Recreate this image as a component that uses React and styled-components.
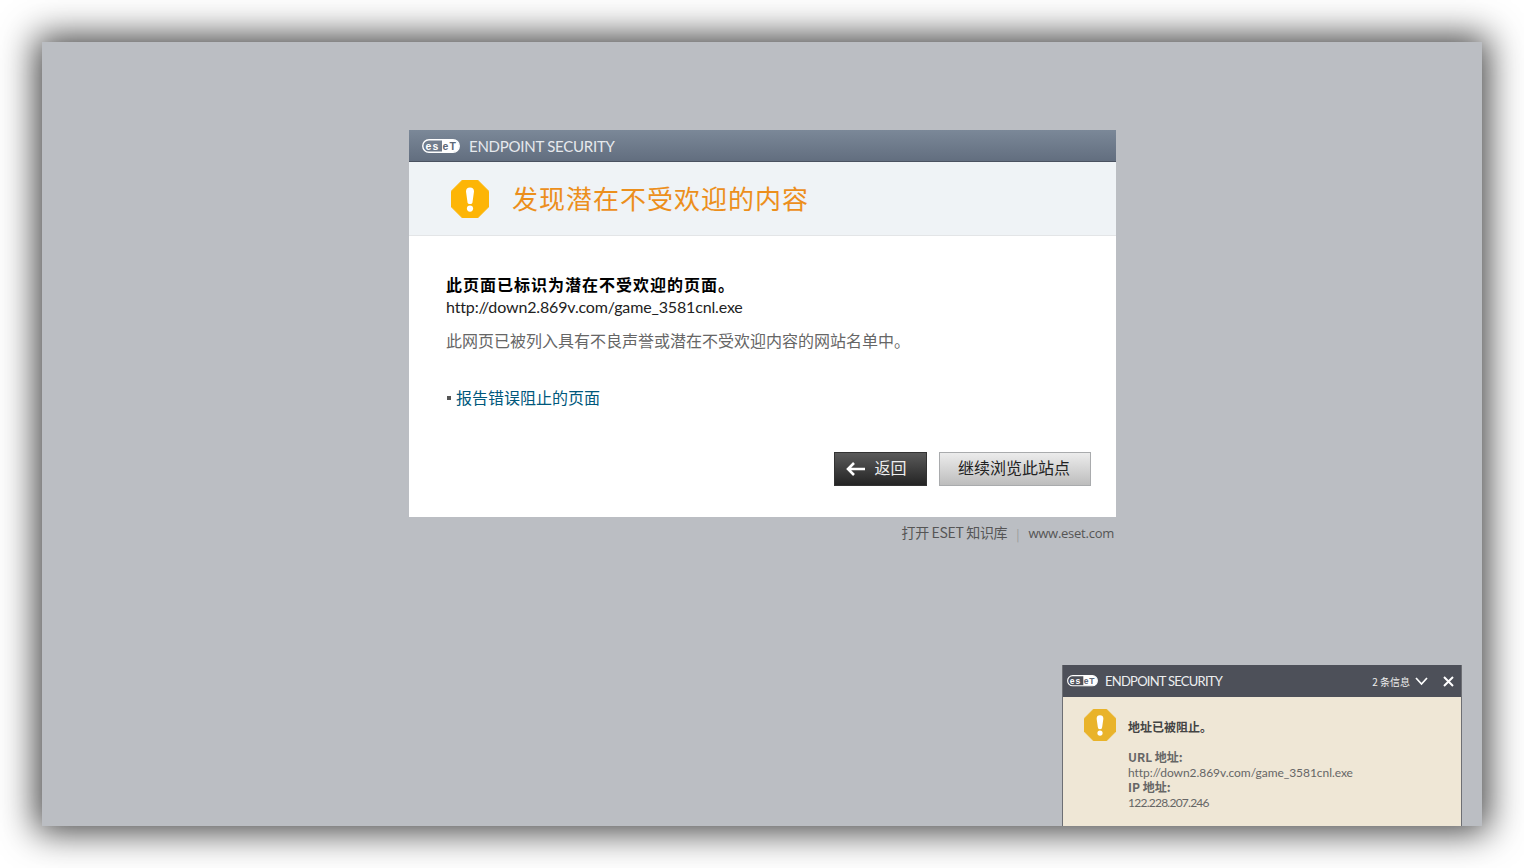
import React from "react";
import styled, { createGlobalStyle } from "styled-components";

const CJK = `"Noto Sans CJK SC", "Liberation Sans", sans-serif`;
const LATIN = `Lato, "Noto Sans CJK SC", sans-serif`;

const Global = createGlobalStyle`
  html, body {
    margin: 0;
    padding: 0;
    background: #fff;
  }
  body {
    font-family: ${CJK};
  }
`;

const Logo = ({ width = 38 }) => (
  <svg width={width} height={(width * 14) / 38} viewBox="0 0 38 14">
    <rect x="0.75" y="0.75" width="36.5" height="12.5" rx="6.2" fill="none" stroke="#fff" strokeWidth="1.4" />
    <path d="M20 1h11a6 6 0 0 1 0 12H20z" fill="#fff" />
    <text x="3.4" y="10.6" fontFamily="Liberation Sans" fontWeight="700" fontSize="10.5" letterSpacing="1.2" fill="#fff">es</text>
    <text x="20.6" y="10.6" fontFamily="Liberation Sans" fontWeight="700" fontSize="10.5" letterSpacing="1" fill="#5d6877">eT</text>
  </svg>
);

const WarnIcon = ({ size, color }) => (
  <svg width={size} height={size} viewBox="0 0 38 38">
    <path d="M11.5 0h15L38 11.5v15L26.5 38h-15L0 26.5v-15z" fill={color} stroke={color} strokeLinejoin="round" />
    <path d="M15 11.5a4 4 0 0 1 8 0l-1.4 10a2.6 2.6 0 0 1-5.2 0z" fill="#fff" />
    <circle cx="19" cy="28.6" r="3.1" fill="#fff" />
  </svg>
);

const App = () => {
  return (
    <>
      <Global />
      <Page>
        <Screen>
          <Dialog>
            <Brand>
              <Logo />
              <BrandName>ENDPOINT SECURITY</BrandName>
            </Brand>
            <TitleBand>
              <WarnIcon size={38} color="#fdb506" />
              <Title>发现潜在不受欢迎的内容</Title>
            </TitleBand>
            <Body>
              <Heading>此页面已标识为潜在不受欢迎的页面。</Heading>
              <Url>http://down2.869v.com/game_3581cnl.exe</Url>
              <Note>此网页已被列入具有不良声誉或潜在不受欢迎内容的网站名单中。</Note>
              <ReportRow>
                <Bullet />
                <Report href="#">报告错误阻止的页面</Report>
              </ReportRow>
              <Actions>
                <BackButton>
                  <svg width="20" height="14" viewBox="0 0 20 14">
                    <path d="M8 1 2 7l6 6M2.5 7H19" fill="none" stroke="#fff" strokeWidth="2.6" />
                  </svg>
                  <span>返回</span>
                </BackButton>
                <ContinueButton>继续浏览此站点</ContinueButton>
              </Actions>
            </Body>
          </Dialog>
          <FootLinks>
            <Kb>打开 ESET 知识库</Kb>
            <Divider>|</Divider>
            <Site>www.eset.com</Site>
          </FootLinks>
          <Toast>
            <ToastBar>
              <Logo width={31} />
              <ToastName>ENDPOINT SECURITY</ToastName>
              <Count>2 条信息</Count>
              <svg width="13" height="9" viewBox="0 0 13 9">
                <path d="M1 1l5.5 6L12 1" fill="none" stroke="#fff" strokeWidth="1.7" />
              </svg>
              <CloseIcon width="11" height="11" viewBox="0 0 11 11">
                <path d="M1 1l9 9M10 1l-9 9" fill="none" stroke="#fff" strokeWidth="2" />
              </CloseIcon>
            </ToastBar>
            <ToastBody>
              <WarnIcon size={32} color="#e9b32a" />
              <ToastText>
                <ToastHead>地址已被阻止。</ToastHead>
                <Label>URL 地址:</Label>
                <Value>http://down2.869v.com/game_3581cnl.exe</Value>
                <Label>IP 地址:</Label>
                <Value $tight>122.228.207.246</Value>
              </ToastText>
            </ToastBody>
          </Toast>
        </Screen>
      </Page>
    </>
  );
};

const Page = styled.div`
  width: 1524px;
  height: 868px;
  padding: 42px;
  box-sizing: border-box;
  overflow: hidden;
`;
const Screen = styled.main`
  position: relative;
  width: 1440px;
  height: 784px;
  padding-top: 88px;
  box-sizing: border-box;
  background: #bbbec3;
  box-shadow: 0 0 34px 6px rgba(0, 0, 0, 0.75);
  overflow: visible;
`;
const Dialog = styled.section`
  width: 707px;
  margin-left: 367px;
  background: #fff;
`;
const Brand = styled.header`
  display: flex;
  align-items: center;
  gap: 10px;
  height: 32px;
  padding-left: 13px;
  box-sizing: border-box;
  background: linear-gradient(#7b8898, #626e7f);
  border-bottom: 1px solid #4a5260;
`;
const BrandName = styled.span`
  margin-left: -1px;
  font-family: ${LATIN};
  font-size: 15px;
  letter-spacing: -0.25px;
  color: #e6e9ed;
`;
const TitleBand = styled.div`
  display: flex;
  align-items: center;
  gap: 23px;
  height: 74px;
  padding: 0 0 0 42px;
  box-sizing: border-box;
  background: #eff3f6;
  border-bottom: 1px solid #e3e5e7;
`;
const Title = styled.h1`
  margin: 0 0 2px;
  font-size: 26px;
  font-weight: 400;
  line-height: 32px;
  letter-spacing: 1px;
  color: #ec8f1c;
`;
const Body = styled.div`
  height: 281px;
  padding: 37px 25px 0 37px;
  box-sizing: border-box;
`;
const Heading = styled.div`
  font-size: 16px;
  font-weight: 700;
  line-height: 22px;
  letter-spacing: 1px;
  color: #000;
`;
const Url = styled.div`
  margin-top: 1px;
  font-family: ${LATIN};
  font-size: 16px;
  line-height: 22px;
  letter-spacing: -0.15px;
  color: #222;
`;
const Note = styled.div`
  margin-top: 11px;
  font-size: 16px;
  line-height: 22px;
  color: #666;
`;
const ReportRow = styled.div`
  display: flex;
  align-items: center;
  gap: 5px;
  margin-top: 35px;
  height: 22px;
`;
const Bullet = styled.i`
  width: 4px;
  height: 4px;
  margin: 1px 0 0 1px;
  background: #555;
`;
const Report = styled.a`
  font-size: 16px;
  line-height: 22px;
  color: #00587c;
  text-decoration: none;
`;
const Actions = styled.div`
  display: flex;
  justify-content: flex-end;
  gap: 12px;
  margin-top: 44px;
`;
const Button = styled.button`
  height: 34px;
  padding: 0 0 4px;
  box-sizing: border-box;
  font-family: ${CJK};
  font-size: 16px;
  line-height: 20px;
`;
const BackButton = styled(Button)`
  display: flex;
  align-items: center;
  justify-content: center;
  gap: 8px;
  width: 93px;
  padding: 0 8px 0 0;
  border: 1px solid #333;
  background: linear-gradient(#5a5a5a, #242424);
  color: #eee;

  span {
    margin-bottom: 4px;
  }
`;
const ContinueButton = styled(Button)`
  width: 152px;
  padding-right: 2px;
  border: 1px solid #a9abad;
  background: linear-gradient(#ececec, #bdbdbd);
  color: #222;
`;
const FootLinks = styled.footer`
  display: flex;
  align-items: center;
  justify-content: flex-end;
  gap: 9px;
  width: 705px;
  margin: 6px 0 0 367px;
  height: 20px;
  font-size: 14px;
  color: #555;
`;
const Kb = styled.span`
  margin-bottom: 2px;
  letter-spacing: -0.35px;
`;
const Divider = styled.span`
  color: #999;
  font-size: 12px;
`;
const Site = styled.span`
  font-family: "Open Sans", sans-serif;
  font-size: 13px;
  font-weight: 500;
  letter-spacing: -0.25px;
`;
const Toast = styled.aside`
  position: absolute;
  right: 20px;
  bottom: 0;
  width: 400px;
  height: 161px;
  box-sizing: border-box;
  background: #efe7d6;
  border: 1px solid #6d6f74;
  border-top: 0;
  border-bottom: 0;
`;
const ToastBar = styled.header`
  display: flex;
  align-items: center;
  height: 32px;
  padding: 0 7px 0 4px;
  background: #4d5059;
`;
const ToastName = styled.span`
  margin-left: 7px;
  font-family: ${LATIN};
  font-size: 13px;
  letter-spacing: -0.75px;
  color: #eceef0;
`;
const Count = styled.span`
  margin-left: auto;
  margin-right: 5px;
  font-size: 10px;
  color: #eee;
`;
const CloseIcon = styled.svg`
  margin-left: 15px;
`;
const ToastBody = styled.div`
  display: flex;
  gap: 12px;
  padding: 12px 0 0 21px;
`;
const ToastText = styled.div`
  padding-top: 9px;
`;
const ToastHead = styled.div`
  margin-bottom: 13px;
  font-size: 12px;
  font-weight: 700;
  line-height: 18px;
  color: #444;
`;
const Label = styled.div`
  font-size: 12px;
  font-weight: 700;
  line-height: 15px;
  color: #666;
`;
const Value = styled.div`
  position: relative;
  top: 1px;
  font-family: ${LATIN};
  font-size: 12px;
  line-height: 15px;
  letter-spacing: ${(p) => (p.$tight ? "-0.75px" : "-0.05px")};
  color: #666;
`;

export default App;
